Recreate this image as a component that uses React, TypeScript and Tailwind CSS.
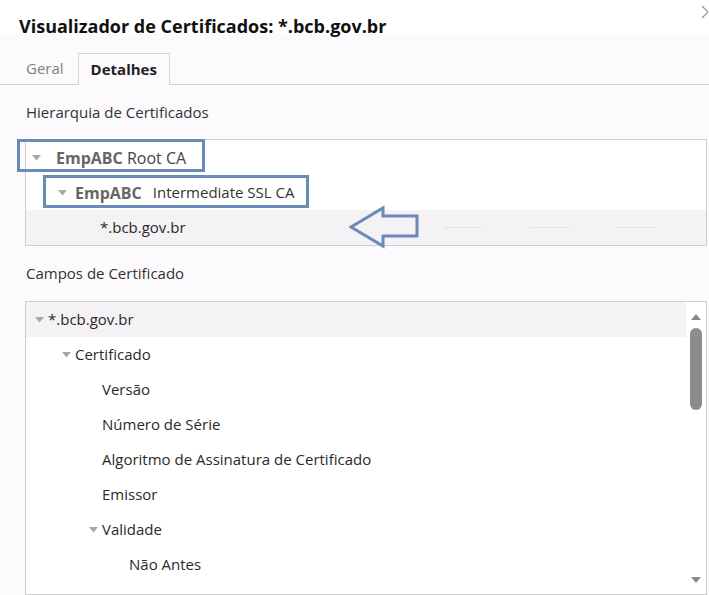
import React from "react";

const Tri = () => (
  <svg width="9" height="6" viewBox="0 0 9 6" className="shrink-0">
    <path d="M0 0 L9 0 L4.5 5.5 Z" fill="#a8a8a8" />
  </svg>
);

type Field = { label: string; level: number; open?: boolean; selected?: boolean };

const fields: Field[] = [
  { label: "*.bcb.gov.br", level: 0, open: true, selected: true },
  { label: "Certificado", level: 1, open: true },
  { label: "Versão", level: 2 },
  { label: "Número de Série", level: 2 },
  { label: "Algoritmo de Assinatura de Certificado", level: 2 },
  { label: "Emissor", level: 2 },
  { label: "Validade", level: 2, open: true },
  { label: "Não Antes", level: 3 },
];

const indent = ["pl-[9px]", "pl-[36px]", "pl-[63px]", "pl-[90px]"];

const App: React.FC = () => {
  return (
    <div
      className="w-[709px] h-[595px] overflow-hidden bg-[#fcfafc] text-[#2a2a2a]"
      style={{ fontFamily: '"Open Sans", "Noto Sans", sans-serif' }}
    >
      {/* Title bar */}
      <div className="relative h-[34px] bg-white pl-[19px] pt-[17px]">
        <h1 className="text-[18px] leading-none font-bold text-[#111]">
          Visualizador de Certificados: *.bcb.gov.br
        </h1>
        <svg width="8" height="14" viewBox="0 0 8 14" className="absolute right-0 top-[5px]">
          <path d="M1 1 L7 7 M7 7 L1 13" stroke="#9a9a9a" strokeWidth="1.2" fill="none" />
        </svg>
      </div>

      {/* Tabs */}
      <div className="flex items-end h-[51px] border-b border-[#d6d4d6] pl-[10px]">
        <div className="pl-[16px] pr-[14px] h-[32px] flex items-center text-[15px] text-[#808080]">Geral</div>
        <div className="px-[12px] h-[32px] -mb-px flex items-center text-[15px] font-bold text-[#222] border border-b-0 border-[#d6d4d6] bg-[#fcfafc]">
          Detalhes
        </div>
      </div>

      <div className="pl-[25px] pr-[2px]">
        {/* Hierarchy */}
        <div className="h-[54px] flex items-center pl-[1px] text-[15px] text-[#333]">
          Hierarquia de Certificados
        </div>
        <div className="relative border border-[#cfcdcf] bg-white">
          <div className="h-[35px] flex items-center gap-[15px] pl-[6px]">
            <Tri />
            <span className="text-[16px]">
              <b className="text-[#666]">EmpABC</b> <span className="text-[#444]">Root CA</span>
            </span>
          </div>
          <div className="h-[35px] flex items-center gap-[8px] pl-[32px]">
            <Tri />
            <span className="flex items-center gap-[11px]">
              <b className="text-[16px] text-[#666]">EmpABC</b>
              <span className="text-[15px] text-[#333]">Intermediate SSL CA</span>
            </span>
          </div>
          <div className="relative h-[35px] flex items-center pl-[74px] bg-[#f4f2f4] text-[15px]">
            *.bcb.gov.br
            <div className="absolute left-[417px] top-[17px] flex gap-[48px]">
              <div className="w-[39px] h-px bg-[#e4e2e4]" />
              <div className="w-[39px] h-px bg-[#e4e2e4]" />
              <div className="w-[39px] h-px bg-[#e4e2e4]" />
            </div>
          </div>

          {/* annotation boxes */}
          <div className="absolute left-[-9px] top-[-1px] w-[188px] h-[33px] border-[3px] border-[#6a8ab8]" />
          <div className="absolute left-[17px] top-[35px] w-[266px] h-[33px] border-[3px] border-[#6a8ab8]" />
          <svg width="74" height="44" viewBox="0 0 74 44" className="absolute left-[323px] top-[65px]">
            <path
              d="M2 22 L34 3 L34 11 L68 11 L68 31 L34 31 L34 41 Z"
              fill="none"
              stroke="#6a8ab8"
              strokeWidth="3"
              strokeLinejoin="miter"
            />
          </svg>
        </div>

        {/* Fields */}
        <div className="h-[55px] flex items-center pl-[1px] text-[15px] text-[#333]">
          Campos de Certificado
        </div>
        <div className="relative border border-[#cfcdcf] bg-white h-[294px] overflow-hidden">
          <div className="mr-[20px]">
            {fields.map((f) => (
              <div
                key={f.label}
                className={`h-[35px] flex items-center gap-[4px] text-[15px] ${indent[f.level]} ${
                  f.selected ? "bg-[#f4f2f4]" : ""
                }`}
              >
                {f.open ? <Tri /> : <span className="w-[9px]" />}
                <span>{f.label}</span>
              </div>
            ))}
          </div>
          {/* scrollbar */}
          <div className="absolute right-0 top-0 bottom-0 w-[20px] flex flex-col items-center">
            <svg width="10" height="6" viewBox="0 0 10 6" className="mt-[12px]">
              <path d="M0 6 L5 0 L10 6 Z" fill="#8a8a8a" />
            </svg>
            <div className="mt-[8px] w-[12px] h-[82px] rounded-full bg-[#8c8c8c]" />
          </div>
          <svg width="10" height="6" viewBox="0 0 10 6" className="absolute right-[5px] top-[275px]">
            <path d="M0 0 L10 0 L5 6 Z" fill="#8a8a8a" />
          </svg>
        </div>
      </div>
    </div>
  );
};

export default App;
